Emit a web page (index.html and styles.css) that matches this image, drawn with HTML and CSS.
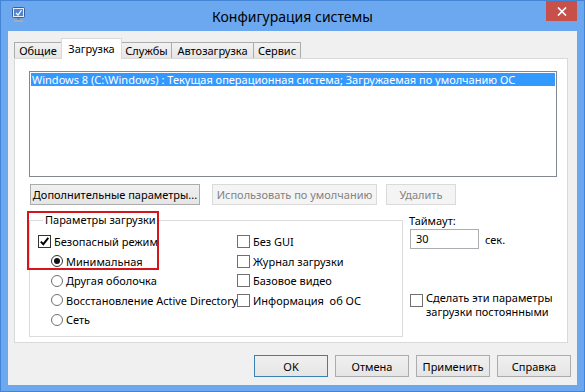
FILE: index.html
```html
<!DOCTYPE html>
<html lang="ru">
<head>
<meta charset="utf-8">
<title>Конфигурация системы</title>
<link rel="stylesheet" href="styles.css">
</head>
<body>
<div class="window">
  <div class="titlebar">
    <div class="tb-left">
      <svg class="app-icon" width="14" height="16" viewBox="0 0 14 16">
        <rect x="0.5" y="0.5" width="12" height="10" rx="1" fill="#e4ecf7" stroke="#3b5f9a"/>
        <rect x="2" y="2" width="9" height="7" fill="#4f86d4"/>
        <path d="M4 6 L6 8 L9.5 3" stroke="#fff" stroke-width="1.3" fill="none"/>
        <rect x="5" y="11" width="3" height="2" fill="#7d8a99"/>
        <rect x="2" y="13" width="9" height="2" fill="#a3adb8"/>
      </svg>
    </div>
    <div class="title">Конфигурация системы</div>
    <div class="tb-right">
      <div class="close">
        <svg width="10" height="9" viewBox="0 0 10 9"><path d="M1 0.5 L9 8.5 M9 0.5 L1 8.5" stroke="#fff" stroke-width="1.7"/></svg>
      </div>
    </div>
  </div>
  <div class="client">
    <div class="tabs">
      <div class="tab tab-general">Общие</div>
      <div class="tab tab-boot active">Загрузка</div>
      <div class="tab tab-services">Службы</div>
      <div class="tab tab-startup">Автозагрузка</div>
      <div class="tab tab-tools">Сервис</div>
    </div>
    <div class="panel">
      <div class="listbox">
        <div class="list-item selected">Windows 8 (C:\Windows) : Текущая операционная система; Загружаемая по умолчанию ОС</div>
      </div>
      <div class="btn-row">
        <div class="btn btn-adv">Дополнительные параметры...</div>
        <div class="btn disabled btn-default-os">Использовать по умолчанию</div>
        <div class="btn disabled btn-del">Удалить</div>
      </div>
      <div class="lower">
        <fieldset class="group">
          <legend>Параметры загрузки</legend>
          <div class="opts">
            <div class="col">
              <div class="opt"><span class="cb checked"><svg width="11" height="11" viewBox="0 0 11 11"><path d="M1.8 5.6 L4.3 8.2 L9.3 1.8" stroke="#000" stroke-width="1.9" fill="none"/></svg></span>Безопасный режим</div>
              <div class="opt sub"><span class="rb on"></span>Минимальная</div>
              <div class="opt sub"><span class="rb"></span>Другая оболочка</div>
              <div class="opt sub"><span class="rb"></span>Восстановление Active Directory</div>
              <div class="opt sub"><span class="rb"></span>Сеть</div>
            </div>
            <div class="col">
              <div class="opt"><span class="cb"></span>Без GUI</div>
              <div class="opt"><span class="cb"></span>Журнал загрузки</div>
              <div class="opt"><span class="cb"></span>Базовое видео</div>
              <div class="opt"><span class="cb"></span>Информация&nbsp; об ОС</div>
            </div>
          </div>
          <div class="highlight"></div>
        </fieldset>
        <div class="side">
          <div class="lbl">Таймаут:</div>
          <div class="timeout-row"><div class="input">30</div><span class="unit">сек.</span></div>
          <div class="persist"><span class="cb"></span><span class="persist-text">Сделать эти параметры<br>загрузки постоянными</span></div>
        </div>
      </div>
    </div>
    <div class="footer">
      <div class="btn fbtn default">OK</div>
      <div class="btn fbtn">Отмена</div>
      <div class="btn fbtn">Применить</div>
      <div class="btn fbtn">Справка</div>
    </div>
  </div>
</div>
</body>
</html>
```

FILE: styles.css
```css
html, body {
  margin: 0;
  padding: 0;
}
body {
  font-family: "Noto Sans", "Open Sans", sans-serif;
  font-size: 11px;
  color: #000;
  background: #fff;
}
.window {
  width: 585px;
  height: 392px;
  box-sizing: border-box;
  border: 1px solid #4484d4;
  background: #6ba8ef;
  padding: 0 7px 6px 7px;
  display: flex;
  flex-direction: column;
}
.titlebar {
  height: 30px;
  flex: none;
  display: grid;
  grid-template-columns: 1fr auto 1fr;
  align-items: start;
}
.tb-left {
  padding: 6px 0 0 4px;
}
.app-icon {
  display: block;
}
.title {
  font-size: 14px;
  line-height: 31px;
  color: #000;
}
.tb-right {
  display: flex;
  justify-content: flex-end;
}
.close {
  width: 31px;
  height: 20px;
  background: #c7504b;
  display: flex;
  align-items: center;
  justify-content: center;
}
.close svg {
  display: block;
}
.client {
  flex: 1;
  background: #f0f0f0;
  padding: 7px 9px 8px 6px;
  display: flex;
  flex-direction: column;
}
.tabs {
  display: flex;
  align-items: flex-end;
  height: 20px;
  flex: none;
}
.tab {
  box-sizing: border-box;
  height: 16px;
  border: 1px solid #acacac;
  border-bottom: none;
  background: linear-gradient(#f2f2f2, #e6e6e6);
  margin-right: -1px;
  text-align: center;
  line-height: 15px;
  white-space: nowrap;
}
.tab.active {
  position: relative;
  z-index: 1;
  height: 21px;
  margin-bottom: -1px;
  background: #fff;
  border-color: #d9d9d9;
  padding-top: 2px;
  line-height: 16px;
}
.tab-general { width: 48px; }
.tab-boot { width: 61px; }
.tab-services { width: 51px; }
.tab-startup { width: 83px; }
.tab-tools { width: 48px; }
.panel {
  height: 285px;
  flex: none;
  box-sizing: border-box;
  border: 1px solid #d9d9d9;
  background: #fff;
  padding: 12px 0 0 14px;
}
.listbox {
  width: 528px;
  height: 106px;
  box-sizing: border-box;
  border: 1px solid #828790;
  padding: 1px;
}
.list-item {
  height: 13px;
  line-height: 13px;
  padding-left: 1px;
  white-space: nowrap;
  overflow: hidden;
}
.list-item.selected {
  background: #3399ff;
  color: #fff;
}
.btn-row {
  display: flex;
  margin-top: 7px;
  padding-left: 1px;
}
.btn {
  box-sizing: border-box;
  height: 21px;
  border: 1px solid #acacac;
  background: linear-gradient(#f0f0f0, #e5e5e5);
  display: flex;
  align-items: center;
  justify-content: center;
  white-space: nowrap;
}
.btn.disabled {
  background: #f4f4f4;
  border-color: #dadada;
  color: #838383;
}
.btn-adv { width: 170px; }
.btn-default-os { width: 165px; margin-left: 12px; }
.btn-del { width: 70px; margin-left: 9px; }
.lower {
  display: flex;
  margin-top: 7px;
  align-items: flex-start;
}
.group {
  position: relative;
  margin: 0;
  width: 374px;
  box-sizing: border-box;
  border: 1px solid #dcdcdc;
  padding: 4px 0 6px 8px;
  min-width: 0;
}
.group legend {
  margin-left: 5px;
  padding: 0 2px;
  line-height: 16px;
}
.opts {
  display: grid;
  grid-template-columns: 199px 1fr;
}
.opt {
  height: 19.5px;
  display: flex;
  align-items: center;
  white-space: nowrap;
}
.opt.sub {
  padding-left: 13px;
}
.cb {
  flex: none;
  width: 13px;
  height: 13px;
  box-sizing: border-box;
  border: 1px solid #707070;
  background: #fff;
  margin-right: 3px;
  display: flex;
  align-items: center;
  justify-content: center;
}
.cb.checked {
  border-color: #333;
}
.cb svg {
  display: block;
}
.rb {
  flex: none;
  width: 12px;
  height: 12px;
  box-sizing: border-box;
  border: 1px solid #707070;
  border-radius: 50%;
  background: #fff;
  margin-right: 3px;
  display: flex;
  align-items: center;
  justify-content: center;
}
.rb.on {
  border-color: #333;
}
.rb.on::after {
  content: "";
  width: 6px;
  height: 6px;
  border-radius: 50%;
  background: #111;
}
.highlight {
  position: absolute;
  left: -3px;
  top: -17px;
  width: 132px;
  height: 59px;
  box-sizing: border-box;
  border: 2px solid #d4161b;
}
.side {
  margin-left: 6px;
  padding-top: 1px;
}
.lbl {
  line-height: 16px;
}
.timeout-row {
  display: flex;
  align-items: center;
}
.input {
  box-sizing: border-box;
  width: 69px;
  height: 20px;
  margin-left: 1px;
  border: 1px solid #abadb3;
  background: #fff;
  padding-left: 5px;
  line-height: 18px;
}
.unit {
  margin-left: 6px;
}
.persist {
  display: flex;
  align-items: flex-start;
  margin-top: 42px;
  margin-left: 1px;
}
.persist .cb {
  margin-top: 3px;
}
.persist-text {
  line-height: 14px;
}
.footer {
  display: flex;
  justify-content: flex-end;
  gap: 7px;
  margin-top: 12px;
  margin-right: -3px;
}
.fbtn {
  width: 74px;
  height: 22px;
}
.fbtn.default {
  border-color: #3c7fb1;
}
```
